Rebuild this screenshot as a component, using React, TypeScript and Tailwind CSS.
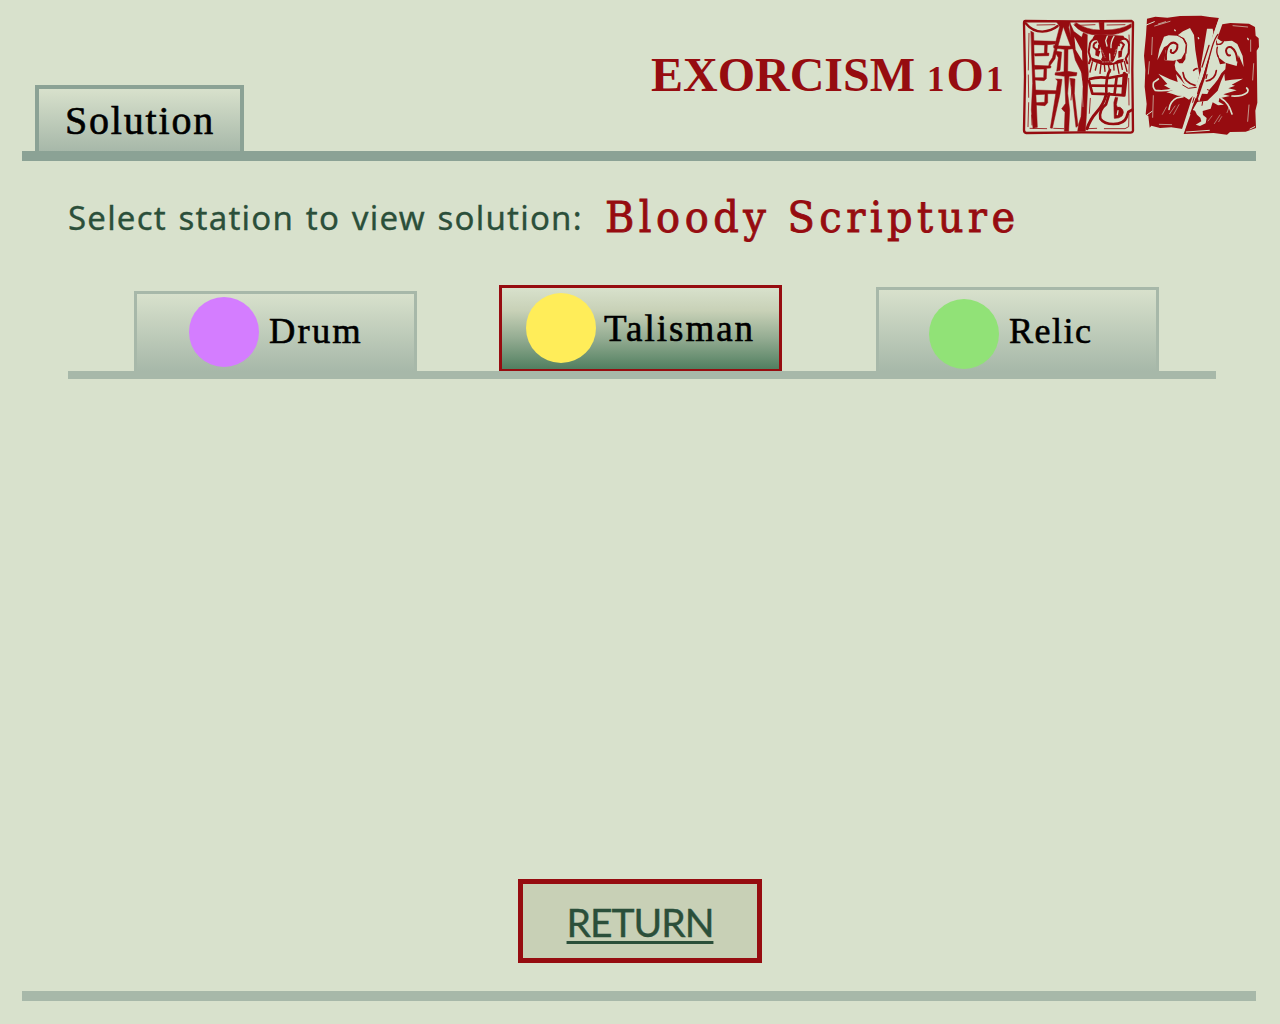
import React from 'react';

const INK = '#960c10';
const PAPER = '#d8e1cc';

function GhostSeal() {
  return (
    <svg viewBox="0 0 375 390" className="block h-[130px] w-[125px] shrink-0" fill="none" stroke={INK} strokeLinejoin="round" strokeLinecap="round">
      <path d="M31 33L180 34L350 33Q355 35 354 41L352 180L354 362Q353 368 346 368L200 367L34 369Q27 368 27 360L30 200L27 39Q27 33 31 33Z" strokeWidth="7" />
      <g strokeWidth="2.5">
        <path d="M42 70L40 180M40 195L41 262M41 278L39 350M45 355L95 356M116 355L146 356M218 356L245 355M268 356L330 356L341 350L342 312M342 285L341 205M342 190L343 118M343 100L342 75M66 45L120 44M190 46L240 44M276 45L330 44" />
        <path d="M171 235L168 270M198 170L203 210M226 265L223 310M50 315L51 345" />
      </g>
      <path d="M32 40Q52 65 82 65Q110 63 128 48" strokeWidth="7" />
      <g fill={INK} stroke={INK} strokeWidth="1.5">
        <path d="M48 64L56 68L58 170L63 260L67 352L54 355L49 300L53 220L50 140Z" />
        <path d="M56 92L122 94L121 102L97 104L96 129L102 130L101 137L60 138L58 131L88 130L89 105L57 104Z" />
        <path d="M57 166L108 168L107 174L95 175L94 206L87 212L60 210L60 203L86 203L87 177L58 178Z" />
        <path d="M60 240L127 242L124 251L98 251L98 278L90 287L63 285L63 278L89 277L90 253L60 254Z" />
        <path d="M124 34L166 34L161 52L171 95L177 112L168 112L145 50L129 108L119 108L134 50Z" />
        <path d="M116 107L175 109L175 116L159 118L158 184L186 188L184 197L162 199L158 250L164 300L161 364L148 364L150 307L140 296L152 280L149 199L120 195L121 188L147 185L148 118L117 114Z" />
        <path d="M124 124L140 126L135 181L125 184L130 143L122 129Z" />
        <path d="M121 108L128 109L120 146L108 163L100 174L103 157L112 143Z" />
        <path d="M123 207L141 208L135 252L112 355L106 354L120 266L128 214Z" />
        <path d="M165 205L180 207L178 250L189 347L183 352L173 264Z" />
        <path d="M164 37L176 64L200 82L205 68L217 74L216 133L220 190L217 252L214 320L211 364L188 364L191 342L198 320L204 230L201 190L181 150L168 91Z" />
        <path d="M183 38Q214 60 255 60L252 37L267 36L267 60Q318 60 349 41L349 52Q325 70 293 74L233 74Q197 69 177 45Z" />
      </g>
      <path d="M178 80L201 123L202 152L182 119Z" fill={PAPER} stroke="none" />
      <path d="M200 215L204 290" stroke={PAPER} strokeWidth="1.5" />
      <g fill={INK} stroke="none">
        <path d="M238 76Q258 69 277 76L300 76L325 77L331 88Q312 90 309 108L304 132L296 153L286 162L266 160L258 149L262 140L256 112L246 90L232 86Z" />
        <path d="M228 142L240 146L256 150L270 158L296 158L308 150L326 146L325 156L308 161L286 166L262 165L244 158L230 153Z" />
        <path d="M242 116L256 124L251 140L241 136Z" />
        <path d="M310 124L322 120L320 140L310 144Z" />
      </g>
      <path d="M277 79L272 92L276 108M297 79Q287 95 288 113M284 132L285 150" stroke={PAPER} strokeWidth="4" />
      <path d="M260 120L270 142M304 118L297 140M262 156L300 155" stroke={PAPER} strokeWidth="1.5" strokeDasharray="4 4" />
      <path d="M252 106Q254 117 246 120L236 112Q234 100 244 97M246 88Q231 85 225 100L221 126L227 146L222 160M312 106Q308 97 319 97L327 104L320 118M322 86Q338 84 342 103L341 129L332 146L337 160" strokeWidth="6" />
      <path d="M232 156L225 186M246 160L241 180M258 162L255 190M268 164L270 184M280 164L285 186M296 162L297 180M306 160L312 190M318 158L322 178M328 154L336 184" strokeWidth="4" />
      <path d="M285 180Q272 200 274 246" strokeWidth="8" />
      <path d="M224 207Q250 199 281 204L335 194L328 256Q279 251 232 251L222 213M231 227L328 228M305 201L299 249" strokeWidth="8" />
      <path d="M328 190L324 254" strokeWidth="10" />
      <path d="M274 252Q266 283 246 305Q225 328 216 356" strokeWidth="9" />
      <path d="M283 251L273 283Q251 299 256 326Q267 342 295 342Q328 342 335 321L340 306L352 299" strokeWidth="8" />
      <path d="M301 262Q294 278 297 293L298 325Q311 326 321 318Q328 307 323 299Q316 288 307 292L304 284L308 264Z" fill={INK} stroke={INK} strokeWidth="2" />
      <path d="M309 302L307 314" stroke={PAPER} strokeWidth="4" />
    </svg>
  );
}

function BeastSeal() {
  return (
    <svg viewBox="0 0 384 390" className="block h-[130px] w-[128px] shrink-0" strokeLinejoin="round" strokeLinecap="round">
      <g fill={INK}>
        <path d="M27 26L52 20L88 23L126 18L190 17L215 21L243 24L235 61L207 133L179 226L134 357L100 352L66 354L40 347L35 353L31 318L23 313L26 282L20 230L22 180L18 137L24 75Z" />
        <path d="M253 43L277 39L333 41L351 51L353 77L362 85L363 111L356 122L357 197L358 278L352 302L354 354L323 365L276 366L267 374L227 369L137 372L142 357L180 248L208 156L236 91Z" />
      </g>
      <g fill={PAPER}>
        <path d="M116 78L135 64L156 54L168 75L172 120L180 170L184 195L176 226L160 233L148 228L137 217L128 198L113 180L110 165L114 149L124 160L134 160L142 148L144 120L146 100L138 84Z" />
        <path d="M58 151L64 118L78 80L92 76L118 77L134 86L143 104L141 127L130 146L106 152L80 151L82 122L92 104L78 112Z" />
        <path d="M207 56L224 56L226 66L222 93L207 128L190 185L188 170L198 110Z" />
        <path d="M232 88L240 120L240 143L246 163L264 160L262 178L250 190L239 209L229 222L214 239L208 252L192 251L183 276L180 266L203 198L218 129Z" />
        <path d="M236 84L250 94L262 94L282 92L298 102L314 138L317 171L302 136L296 168L262 158L244 144L236 124L238 108Z" />
        <path d="M61 191L96 208L119 216L114 192L137 219L156 229L176 229L170 253L153 269L135 258L119 257L102 251L85 247L104 241L78 226L88 222Z" />
        <path d="M249 214L259 191L261 212L281 209L315 206L281 224L291 227L271 235L296 241L256 253L276 258L244 265L242 275L258 284L240 286L224 277L218 296L194 303L195 315L206 324L203 340L186 348L173 344L190 334L187 323L177 314L171 302L164 300L178 276L208 272L239 242Z" />
      </g>
      <g fill="none" stroke={INK}>
        <path d="M84 148Q82 118 94 104Q106 92 118 104Q120 122 106 129Q96 130 99 120" strokeWidth="6" />
        <path d="M298 152Q296 122 280 112Q266 108 264 122Q266 138 276 136" strokeWidth="6" />
        <path d="M118 76Q138 82 145 100M146 104L144 130" strokeWidth="3" />
        <path d="M236 102Q250 106 256 94M240 140Q234 124 238 112" strokeWidth="4" />
      </g>
      <g fill="none" stroke={PAPER}>
        <path d="M61 207L47 217Q42 230 52 241Q75 244 102 239L137 232" strokeWidth="5" />
        <path d="M282 258Q313 260 328 247Q333 239 326 234" strokeWidth="5" />
        <path d="M93 298Q96 274 116 264L135 260M249 265Q272 278 282 312" strokeWidth="5" />
        <path d="M246 27L196 172L135 361" strokeWidth="8" />
        <path d="M245 36L222 104" strokeWidth="11" />
        <path d="M43 82L41 134M46 257L44 322M50 48L96 34M61 42L83 35M338 90L338 124M333 285L329 334M285 47L329 51M347 161L344 210M34 155L31 192M64 343L101 344" strokeWidth="2" />
        <path d="M85 291L73 313M111 288L95 311M123 284L107 313M246 315L229 341M251 320L242 335M274 289L267 308M222 318L210 333" strokeWidth="1.5" />
        <path d="M25 45L49 35M28 314L42 304M336 357L350 350M145 366L214 361" strokeWidth="3" />
        <path d="M181 83L182 86M110 60L112 62M329 85L331 89" strokeWidth="4" />
      </g>
      <g fill="none" stroke={INK}>
        <path d="M240 73Q230 85 222 112L197 201Q184 226 179 251M213 106L192 171M174 266L158 311" strokeWidth="4" />
        <path d="M135 188Q138 218 171 226M167 181Q173 175 177 176M235 182Q232 209 205 213" strokeWidth="5" />
        <path d="M134 225L151 235L175 232M208 239Q222 247 236 235M168 263L164 277M194 275L192 286" strokeWidth="3" />
        <path d="M207 194L204 205" strokeWidth="4" />
      </g>
    </svg>
  );
}

const serif = 'font-["Liberation_Serif",serif] text-black [-webkit-text-stroke:0.6px_black]';

export default function App() {
  return (
    <main className="flex h-[1024px] w-[1280px] flex-col overflow-hidden bg-[#d8e1cc] whitespace-nowrap">
      <header className="flex h-[151px] shrink-0 items-start pl-[35px]">
        <div className="flex h-[66px] w-[209px] self-end border-4 border-b-0 border-[#8ba295] bg-linear-to-b from-[#d8e1cc] to-[#a7b8a9] pl-[26px]">
          <span className={`${serif} text-[40px] leading-[63px] tracking-[1.8px]`}>Solution</span>
        </div>
        <h1 className='ml-[407px] w-[364px] pt-[44px] font-["Liberation_Serif",serif] text-[48px] leading-[62px] font-bold text-[#960c10]'>
          EXORCISM <span className="text-[35px] tracking-[2px]">1</span>O<span className="ml-[2px] text-[35px]">1</span>
        </h1>
        <div className="flex pt-[10px]">
          <GhostSeal />
          <div className="-ml-[2px]"><BeastSeal /></div>
        </div>
      </header>
      <div className="mr-[24px] ml-[22px] h-[10px] shrink-0 bg-[#8ba295]" />

      <section className="flex h-[124px] shrink-0 pl-[68px]">
        <p className='w-[537px] pt-[32px] font-["Noto_Sans",sans-serif] text-[33px] leading-[50px] tracking-[1.2px] [word-spacing:2px] text-[#2b4f3a] [-webkit-text-stroke:0.3px_#2b4f3a]'>
          Select station to view solution:
        </p>
        <p className='origin-left scale-x-[0.93] pt-[26px] font-["DejaVu_Serif",serif] text-[43px] leading-[61px] tracking-[4.8px] text-[#960c10] [-webkit-text-stroke:0.9px_#960c10]'>
          Bloody Scripture
        </p>
      </section>

      <nav className="flex h-[86px] shrink-0 items-end pl-[134px]">
        <button className="flex h-[80px] w-[283px] items-start border-3 border-b-0 border-[#a7b8a9] bg-linear-to-b from-[#d8e1cc] to-[#a7b8a9] pl-[52px]">
          <span className="mt-[3px] size-[70px] rounded-full bg-[#d47dff]" />
          <span className={`${serif} ml-[10px] text-[36.5px] leading-[74px] tracking-[2.2px]`}>Drum</span>
        </button>
        <button className="ml-[82px] flex h-[86px] w-[283px] items-start border-3 border-b-2 border-[#960c10] bg-[linear-gradient(to_bottom,#d8e1cc_0%,#c8d1b7_28%,#94ac92_62%,#517f60_100%)] pl-[24px]">
          <span className="mt-[5px] size-[70px] rounded-full bg-[#ffed59]" />
          <span className={`${serif} ml-[8px] text-[37px] leading-[82px] tracking-[2px]`}>Talisman</span>
        </button>
        <button className="ml-[94px] flex h-[84px] w-[283px] items-start border-3 border-b-0 border-[#a7b8a9] bg-linear-to-b from-[#d8e1cc] to-[#a7b8a9] pl-[50px]">
          <span className="mt-[9px] size-[70px] rounded-full bg-[#91e277]" />
          <span className={`${serif} ml-[10px] text-[36px] leading-[82px] tracking-[1.5px]`}>Relic</span>
        </button>
      </nav>
      <div className="mr-[64px] ml-[68px] h-[8px] shrink-0 bg-[#a7b8a9]" />

      <div className="mt-[500px] flex shrink-0 justify-center">
        <a className='flex h-[84px] w-[244px] justify-center border-5 border-[#960c10] bg-[#c8d0b6] font-["Lato",sans-serif] text-[39px] leading-[76px] tracking-[-1px] text-[#2b4f3a] underline decoration-[2.5px] underline-offset-[4px] [-webkit-text-stroke:0.4px_#2b4f3a]'>
          RETURN
        </a>
      </div>
      <footer className="mt-[28px] mr-[24px] ml-[22px] h-[10px] shrink-0 bg-[#a7b8a9]" />
    </main>
  );
}
